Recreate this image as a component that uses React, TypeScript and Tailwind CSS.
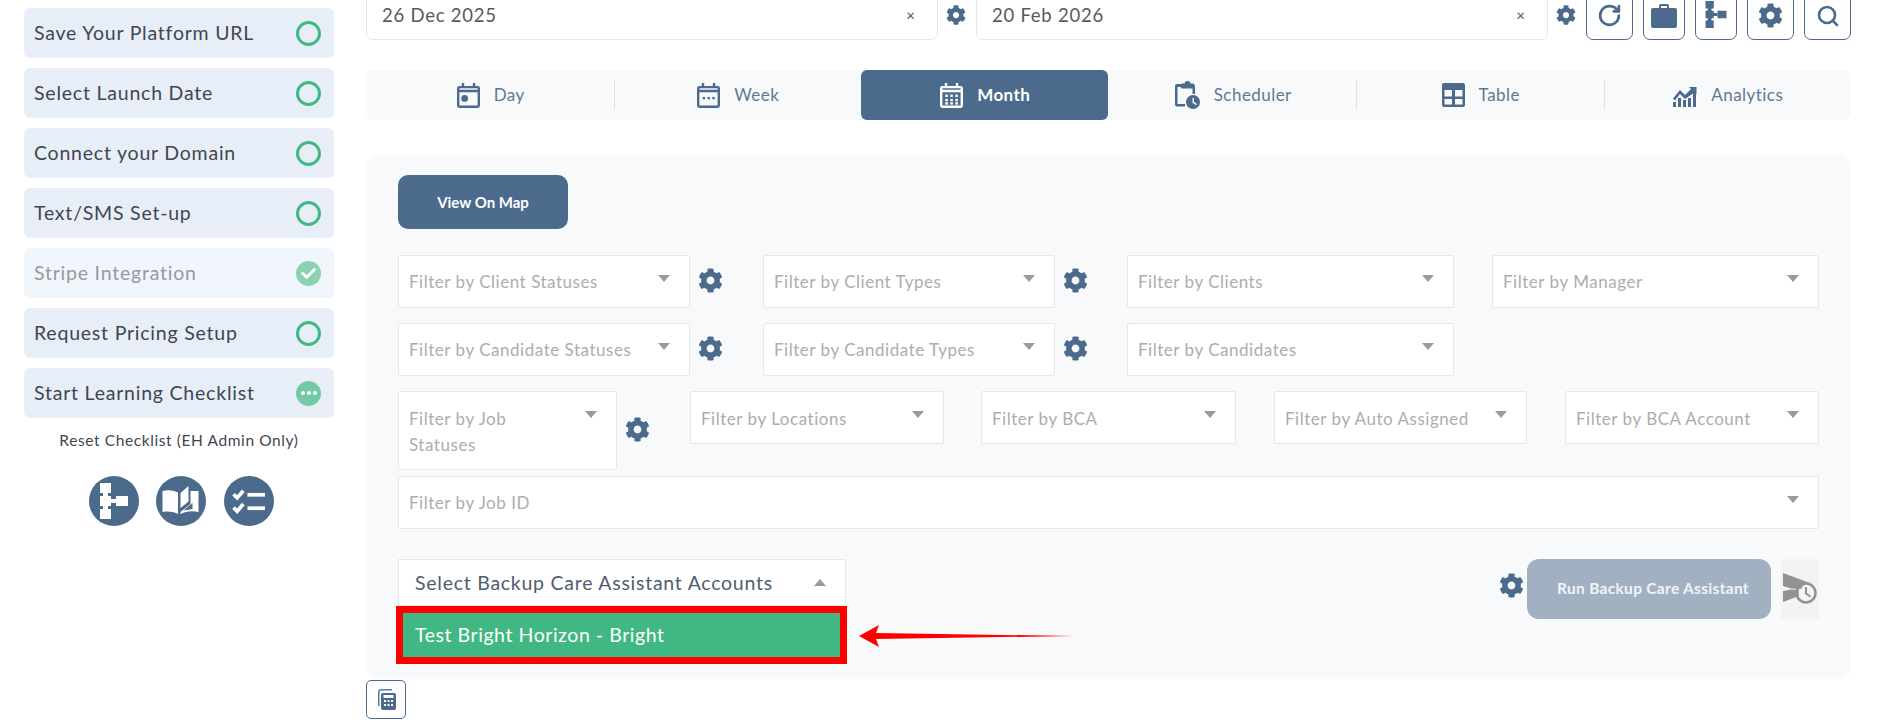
import React from "react";
import { FaCog, FaCheck } from "react-icons/fa";
import { RotateCw, Search } from "lucide-react";

const BLUE = "#4b6a8c";

function Flow({ className = "", color = BLUE }: { className?: string; color?: string }) {
  return (
    <svg viewBox="0 0 28 36" className={className} fill={color}>
      <rect x="0" y="0" width="11" height="10" />
      <rect x="0" y="13" width="11" height="10" />
      <rect x="0" y="26" width="11" height="10" />
      <rect x="3" y="9" width="5" height="18" />
      <rect x="10" y="16" width="6" height="4" />
      <rect x="16" y="13" width="12" height="10" />
    </svg>
  );
}

function Book() {
  return (
    <svg viewBox="0 0 36 30" className="w-[37px] h-[30px]" fill="white">
      <path d="M0 5c5-1.500 10-1 15.500 1.500V28C10 25.500 5 25 0 26z" />
      <path d="M18 22V7l8-7v15.500zM28 5h2v12l-9 7.500 9-1.500V5h6v21c-6-1.500-13-1-17.500 2H18v-2l10-8z" />
    </svg>
  );
}

function Tasks() {
  return (
    <svg viewBox="0 0 32 26" className="w-[33px] h-[27px]" fill="none" stroke="white" strokeWidth="3.600">
      <path d="M1.500 6 5 9.500 11 2.500" />
      <path d="M1.500 19 5 22.500 11 15.500" />
      <path d="M15 6.500h17" />
      <path d="M15 19.500h17" />
    </svg>
  );
}

function SidebarRow({ label, state = "todo" }: { label: string; state?: "todo" | "done" | "progress" }) {
  const muted = state === "done";
  return (
    <div className={`h-[50px] rounded-[6px] flex items-center justify-between pl-[10px] pr-[13px] ${muted ? "bg-[#f1f5fc] text-[#96999f]" : "bg-[#e8eef8] text-[#41464f]"}`}>
      <span className="text-[19.500px] tracking-[0.78px]">{label}</span>
      {state === "todo" && <span className="w-[25px] h-[25px] rounded-full border-[3px] border-[#41b883]" />}
      {state === "done" && (
        <span className="w-[25px] h-[25px] rounded-full bg-[#8ad2b0] flex items-center justify-center">
          <FaCheck className="text-white text-[15px]" />
        </span>
      )}
      {state === "progress" && (
        <span className="w-[25px] h-[25px] rounded-full bg-[#73c9a4] flex items-center justify-center gap-[2px]">
          <i className="w-[4px] h-[4px] rounded-full bg-white" />
          <i className="w-[4px] h-[4px] rounded-full bg-white" />
          <i className="w-[4px] h-[4px] rounded-full bg-white" />
        </span>
      )}
    </div>
  );
}

function Sidebar() {
  return (
    <aside className="w-[342px] pl-[24px] pr-[8px] pt-[8px] shrink-0">
      <div className="flex flex-col gap-[10px]">
        <SidebarRow label="Save Your Platform URL" />
        <SidebarRow label="Select Launch Date" />
        <SidebarRow label="Connect your Domain" />
        <SidebarRow label="Text/SMS Set-up" />
        <SidebarRow label="Stripe Integration" state="done" />
        <SidebarRow label="Request Pricing Setup" />
        <SidebarRow label="Start Learning Checklist" state="progress" />
      </div>
      <p className="text-center text-[15.500px] tracking-[0.6px] text-[#41464f] mt-[10px] leading-[24px]">Reset Checklist (EH Admin Only)</p>
      <div className="flex justify-center gap-[17px] mt-[24px] ml-[4px]">
        <span className="w-[50px] h-[50px] rounded-full bg-[#4b6a8c] flex items-center justify-center">
          <Flow className="w-[28px] h-[36px]" color="white" />
        </span>
        <span className="w-[50px] h-[50px] rounded-full bg-[#4b6a8c] flex items-center justify-center">
          <Book />
        </span>
        <span className="ml-[1px] w-[50px] h-[50px] rounded-full bg-[#4b6a8c] flex items-center justify-center">
          <Tasks />
        </span>
      </div>
    </aside>
  );
}

function DateBox({ value }: { value: string }) {
  return (
    <div className="w-[572px] h-[60px] bg-white border border-[#e8e8e8] rounded-[6px] flex items-end justify-between pl-[15px] pr-[22px] pb-[9px] shrink-0">
      <span className="text-[18.500px] tracking-[0.75px] text-[#555a60] leading-[30px]">{value}</span>
      <span className="text-[15px] text-[#555] leading-[30px]">×</span>
    </div>
  );
}

function TopBtn({ w, children }: { w: string; children: React.ReactNode }) {
  return (
    <button className={`${w} h-[60px] border-[1.5px] border-[#4b6a8c] rounded-[7px] bg-white flex items-end justify-center pb-[11px] shrink-0`}>
      {children}
    </button>
  );
}

function TopGear() {
  return (
    <span className="w-[38px] flex justify-center pb-[15px] pr-[3px] shrink-0">
      <FaCog className="text-[20px] text-[#4b6a8c]" />
    </span>
  );
}

function TopBar() {
  return (
    <div className="h-[40px] overflow-hidden flex items-end">
      <DateBox value="26 Dec 2025" />
      <TopGear />
      <DateBox value="20 Feb 2026" />
      <TopGear />
      <div className="flex gap-[10px]">
        <TopBtn w="w-[47px]"><RotateCw className="w-[25px] h-[25px] text-[#4b6a8c]" strokeWidth={2.6} /></TopBtn>
        <TopBtn w="w-[42px]">
          <svg viewBox="0 0 26 24" className="w-[26px] h-[24px]" fill={BLUE}>
            <path d="M8 4V2a2 2 0 0 1 2-2h6a2 2 0 0 1 2 2v2h6a2 2 0 0 1 2 2v16a2 2 0 0 1-2 2H2a2 2 0 0 1-2-2V6a2 2 0 0 1 2-2zm2 0h6V2h-6z" />
          </svg>
        </TopBtn>
        <TopBtn w="w-[42px]"><Flow className="w-[22px] h-[27px]" /></TopBtn>
        <TopBtn w="w-[47px]"><FaCog className="text-[25px] text-[#4b6a8c]" /></TopBtn>
        <TopBtn w="w-[47px]"><Search className="w-[24px] h-[24px] text-[#4b6a8c]" strokeWidth={2.6} /></TopBtn>
      </div>
    </div>
  );
}

function Cal({ kind, color }: { kind: "day" | "week" | "month"; color: string }) {
  return (
    <svg viewBox="0 0 24 26" className="w-[23px] h-[25px]" fill={color}>
      <rect x="5" y="0" width="2.500" height="5" />
      <rect x="16.500" y="0" width="2.500" height="5" />
      <path fillRule="evenodd" d="M2.500 3h19A2.500 2.500 0 0 1 24 5.500v18a2.500 2.500 0 0 1-2.500 2.500h-19A2.500 2.500 0 0 1 0 23.500v-18A2.500 2.500 0 0 1 2.500 3zM2.500 9.500v14h19v-14zM2.500 5.500v1.500h19V5.500z" />
      {kind === "day" && <circle cx="8" cy="16" r="3.500" />}
      {kind === "week" && (
        <>
          <rect x="6" y="14.500" width="2.500" height="2.500" />
          <rect x="11" y="14.500" width="2.500" height="2.500" />
          <rect x="16" y="14.500" width="2.500" height="2.500" />
        </>
      )}
      {kind === "month" &&
        [12, 16.500, 20].flatMap((y) =>
          [5.500, 10.700, 16].map((x) => <rect key={`${x}-${y}`} x={x} y={y} width="2.700" height="2.500" />)
        )}
    </svg>
  );
}

function SchedIcon() {
  return (
    <svg viewBox="0 0 25 28" className="w-[25px] h-[28px]" fill={BLUE}>
      <path d="M7 3h2.500a3 3 0 0 1 6 0H18a2 2 0 0 1 2 2v8h-2.500V6H2.500v17H10v2.500H2a2 2 0 0 1-2-2V5a2 2 0 0 1 2-2h2v-.1z" />
      <rect x="6" y="2.500" width="13" height="5" rx="1" />
      <circle cx="18" cy="21" r="7" />
      <path d="M17.500 17h1.500v4l3 2-.8 1.200-3.700-2.400z" fill="#f8f9fb" />
    </svg>
  );
}

function TableIcon() {
  return (
    <svg viewBox="0 0 23 24" className="w-[23px] h-[24px]" fill={BLUE}>
      <path fillRule="evenodd" d="M2 0h19a2 2 0 0 1 2 2v20a2 2 0 0 1-2 2H2a2 2 0 0 1-2-2V2a2 2 0 0 1 2-2zM2.500 7v6.500h7.500V7zM13 7v6.500h7.500V7zM2.500 16v5.500h7.500V16zM13 16v5.500h7.500V16z" />
    </svg>
  );
}

function ChartIcon() {
  return (
    <svg viewBox="0 0 24 24" className="w-[24px] h-[24px]" fill={BLUE}>
      <rect x="0" y="19" width="3" height="5" />
      <rect x="5" y="15" width="3" height="9" />
      <rect x="10" y="17" width="3" height="7" />
      <rect x="15" y="15" width="3" height="9" />
      <rect x="20" y="9" width="3" height="15" />
      <path d="M0 15.500 7 7l5 5 6-6-2-2h7.500v7.500l-2-2L12 16 7 11l-5 6.500z" />
    </svg>
  );
}

function Tabs() {
  const cell = "h-[50px] flex items-center justify-center gap-[14px] pl-[2px]";
  const txt = "text-[17px] tracking-[0.45px] text-[#5f7893]";
  const sep = "w-[1px] h-[30px] bg-[#dfe2e6]";
  return (
    <div className="mt-[30px] h-[50px] w-[1485px] bg-[#f8f9fb] rounded-[8px] grid grid-cols-6">
      <div className={`${cell} relative`}><Cal kind="day" color={BLUE} /><span className={txt}>Day</span><i className={`${sep} absolute -right-[1px] top-[10px]`} /></div>
      <div className={cell}><Cal kind="week" color={BLUE} /><span className={txt}>Week</span></div>
      <div className={`${cell} bg-[#4b6a8c] rounded-[6px] mr-[1px]`}><Cal kind="month" color="white" /><span className="text-[17px] font-bold tracking-[0.45px] text-white">Month</span></div>
      <div className={`${cell} relative gap-[11px]`}><SchedIcon /><span className={txt}>Scheduler</span><i className={`${sep} absolute -right-[1px] top-[10px]`} /></div>
      <div className={`${cell} relative`}><TableIcon /><span className={txt}>Table</span><i className={`${sep} absolute -right-[1px] top-[10px]`} /></div>
      <div className={cell}><ChartIcon /><span className={txt}>Analytics</span></div>
    </div>
  );
}

function Caret({ up = false, className = "" }: { up?: boolean; className?: string }) {
  return (
    <svg viewBox="0 0 12 7" className={`w-[12px] h-[7px] shrink-0 ${className}`} fill="#9a9a9a">
      <path d={up ? "M0 7 6 0l6 7z" : "M0 0h12L6 7z"} />
    </svg>
  );
}

function Filter({ label, w, wrap = false, low = false }: { label: string; w: string; wrap?: boolean; low?: boolean }) {
  return (
    <div className={`${w} ${wrap ? "h-[79px]" : "h-[53px]"} bg-white border border-[#e6e7e9] rounded-[2px] flex items-start justify-between pl-[10px] pr-[19px] shrink-0`}>
      <span className={`text-[17px] tracking-[0.53px] text-[#adadad] leading-[26px] ${low ? "pt-[14px]" : "pt-[13px]"}`}>
        {wrap ? (<>Filter by Job<br />Statuses</>) : label}
      </span>
      <Caret className="mt-[19px]" />
    </div>
  );
}

function Gear({ w, className = "" }: { w: string; className?: string }) {
  return (
    <span className={`${w} shrink-0 pl-[8px] pt-[13px] ${className}`}>
      <FaCog className="text-[25px] text-[#4b6a8c]" />
    </span>
  );
}

function Panel() {
  return (
    <section className="mt-[35px] w-[1485px] h-[524px] bg-[#f8f9fb] rounded-[12px] pt-[20px] px-[32px]">
      <button className="w-[170px] h-[54px] rounded-[10px] bg-[#4b6a8c] text-white text-[15px] font-bold">View On Map</button>
      <div className="mt-[26px] flex">
        <Filter w="w-[292px]" label="Filter by Client Statuses" />
        <Gear w="w-[73px]" />
        <Filter w="w-[292px]" label="Filter by Client Types" />
        <Gear w="w-[72px]" />
        <Filter w="w-[327px]" label="Filter by Clients" />
        <div className="w-[38px] shrink-0" />
        <Filter w="w-[327px]" label="Filter by Manager" />
      </div>
      <div className="mt-[15px] flex">
        <Filter w="w-[292px]" label="Filter by Candidate Statuses" />
        <Gear w="w-[73px]" />
        <Filter w="w-[292px]" label="Filter by Candidate Types" />
        <Gear w="w-[72px]" />
        <Filter w="w-[327px]" label="Filter by Candidates" />
      </div>
      <div className="mt-[15px] flex">
        <Filter w="w-[219px]" wrap low label="Filter by Job Statuses" />
        <Gear w="w-[73px]" className="!pt-[26px]" />
        <Filter w="w-[254px]" low label="Filter by Locations" />
        <div className="w-[37px] shrink-0" />
        <Filter w="w-[255px]" low label="Filter by BCA" />
        <div className="w-[38px] shrink-0" />
        <Filter w="w-[253px]" low label="Filter by Auto Assigned" />
        <div className="w-[38px] shrink-0" />
        <Filter w="w-[254px]" low label="Filter by BCA Account" />
      </div>
      <div className="mt-[6px] flex">
        <Filter w="w-[1421px]" label="Filter by Job ID" />
      </div>
      <div className="mt-[30px] flex justify-between items-start">
        <div className="relative w-[448px]">
          <div className="h-[47px] bg-white border border-[#e6e7e9] flex items-center justify-between pl-[16px] pr-[19px]">
            <span className="text-[19.500px] tracking-[0.74px] text-[#4f5d6e]">Select Backup Care Assistant Accounts</span>
            <Caret up />
          </div>
          <div className="-ml-[2px] w-[451px] h-[58px] border-[7px] border-[#ff0000] bg-[#41b883] flex items-center pl-[12px] pb-[1px]">
            <span className="text-[19.500px] tracking-[0.55px] text-white">Test Bright Horizon - Bright</span>
          </div>
          <svg viewBox="0 0 216 22" className="absolute left-[461px] top-[66px] w-[216px] h-[22px]" fill="#ff0000">
            <path d="M0 11 20 0l-3 8 199 3-199 3 3 8z" />
          </svg>
        </div>
        <div className="flex items-start">
          <span className="pt-[14px] pr-[3px]"><FaCog className="text-[25px] text-[#4b6a8c]" /></span>
          <button className="w-[244px] h-[60px] rounded-[12px] bg-[#a1b1c2] text-[#f1f4f7] text-[15.500px] tracking-[0.3px] font-bold pl-[8px]">Run Backup Care Assistant</button>
          <div className="ml-[10px] w-[38px] h-[60px] bg-[#f3f3f3] flex items-center justify-center">
            <svg viewBox="0 0 34 32" className="w-[34px] h-[32px]" fill="#929292">
              <path d="M0 0 27 10a11 11 0 0 0-9 6l-10-.5L0 13zM0 29V18l8-1.500 8 .5a11 11 0 0 0 0 6z" />
              <circle cx="23" cy="20" r="9.500" fill="none" stroke="#929292" strokeWidth="2.500" />
              <path d="M22 14h2v6l4 3-1 1.500-5-3.500z" />
            </svg>
          </div>
        </div>
      </div>
    </section>
  );
}

function CalcBtn() {
  return (
    <button className="mt-[1px] w-[40px] h-[39px] border border-[#4b6a8c] rounded-[5px] bg-white flex items-center justify-center">
      <svg viewBox="0 0 20 21" className="w-[20px] h-[21px]" fill={BLUE}>
        <path d="M2 17V3a3 3 0 0 1 3-3h11v1.500H5A1.500 1.500 0 0 0 3.500 3v14z" opacity="0.9" />
        <path fillRule="evenodd" d="M7 4h11a2 2 0 0 1 2 2v13a2 2 0 0 1-2 2H7a2 2 0 0 1-2-2V6a2 2 0 0 1 2-2zM7.500 6v3h10V6zM8 11v2h2v-2zM11.500 11v2h2v-2zM15 11v2h2v-2zM8 15v2h2v-2zM11.500 15v2h2v-2zM15 15v2h2v-2z" />
      </svg>
    </button>
  );
}

export default function App() {
  return (
    <div className="w-[1886px] h-[720px] overflow-hidden bg-white flex font-['Lato','Noto_Sans',sans-serif]">
      <Sidebar />
      <main className="ml-[24px] w-[1485px]">
        <TopBar />
        <Tabs />
        <Panel />
        <CalcBtn />
      </main>
    </div>
  );
}
